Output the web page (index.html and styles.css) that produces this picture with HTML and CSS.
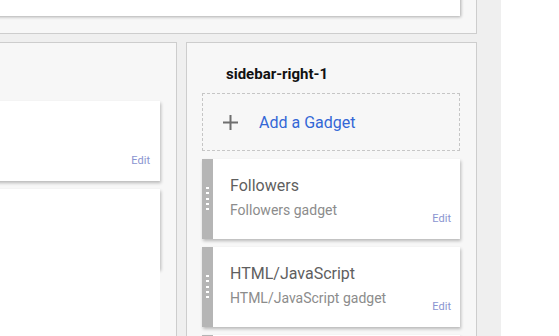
FILE: index.html
```html
<!DOCTYPE html>
<html lang="en">
<head>
    <meta charset="UTF-8">
    <meta name="viewport" content="width=device-width, initial-scale=1.0">
    <title>Layout</title>
    <link rel="stylesheet" href="styles.css">
</head>
<body>
    <div class="editor">
        <section class="section section-top">
            <div class="header-widget"></div>
        </section>

        <div class="columns">
            <section class="section section-main">
                <div class="widget">
                    <div class="widget-body">
                        <div class="widget-text"></div>
                        <a class="edit" href="#">Edit</a>
                    </div>
                </div>
                <div class="widget">
                    <div class="widget-body tall"></div>
                </div>
            </section>

            <section class="section section-side">
                <h3 class="section-title">sidebar-right-1</h3>
                <div class="add-gadget">
                    <svg class="plus" width="15" height="15" viewBox="0 0 15 15">
                        <path d="M7.5 0v15M0 7.5h15" stroke="#6f6f6f" stroke-width="2" fill="none"/>
                    </svg>
                    <a href="#">Add a Gadget</a>
                </div>
                <div class="widget">
                    <div class="handle"><span class="dots"></span></div>
                    <div class="widget-body">
                        <div class="widget-text">
                            <div class="widget-name">Followers</div>
                            <div class="widget-type">Followers gadget</div>
                        </div>
                        <a class="edit" href="#">Edit</a>
                    </div>
                </div>
                <div class="widget">
                    <div class="handle"><span class="dots"></span></div>
                    <div class="widget-body">
                        <div class="widget-text">
                            <div class="widget-name">HTML/JavaScript</div>
                            <div class="widget-type">HTML/JavaScript gadget</div>
                        </div>
                        <a class="edit" href="#">Edit</a>
                    </div>
                </div>
                <div class="widget">
                    <div class="handle"><span class="dots"></span></div>
                    <div class="widget-body"></div>
                </div>
            </section>
        </div>
    </div>
</body>
</html>
```

FILE: styles.css
```css
body {
    margin: 0;
    background-color: #ffffff;
    font-family: Roboto, "Noto Sans", Arial, sans-serif;
    overflow: hidden;
}

.editor {
    width: 801px;
    margin: -80px 0 0 -300px;
    padding: 0 24px 40px 16px;
    box-sizing: border-box;
    background-color: #efefef;
}

.section {
    background-color: #f7f7f7;
    border: 1px solid #cdcdcd;
    box-sizing: border-box;
}

.section-top {
    padding: 16px 16px 17px;
}

.header-widget {
    height: 79px;
    background-color: #ffffff;
    box-shadow: 1px 1px 3px rgba(0, 0, 0, 0.3);
}

.columns {
    display: flex;
    gap: 9px;
    margin-top: 8px;
}

.section-main {
    flex: 1;
    padding: 58px 16px 0 16px;
}

.section-side {
    width: 291px;
    padding: 0 16px 0 15px;
}

.section-title {
    margin: 21px 0 9px;
    padding-left: 24px;
    font-size: 15px;
    font-weight: 700;
    line-height: 20px;
    color: #111111;
}

.add-gadget {
    display: flex;
    align-items: center;
    height: 58px;
    padding: 0 0 0 20px;
    border: 1px dashed #c6c6c6;
    box-sizing: border-box;
    margin-bottom: 8px;
}

.plus {
    margin-right: 21px;
}

.add-gadget a {
    font-size: 16px;
    color: #3367d6;
    text-decoration: none;
}

.widget {
    display: flex;
    height: 80px;
    margin-bottom: 8px;
    box-shadow: 1px 2px 3px rgba(0, 0, 0, 0.25);
}

.handle {
    display: flex;
    align-items: center;
    justify-content: center;
    width: 11px;
    background-color: #b5b5b5;
}

.dots {
    width: 3px;
    height: 24px;
    background: repeating-linear-gradient(#ffffff 0 2px, transparent 2px 5.3px);
}

.widget-body {
    flex: 1;
    display: flex;
    padding: 17px 9px 14px 17px;
    background-color: #ffffff;
}

.widget-body.tall {
    height: 200px;
}

.widget-text {
    flex: 1;
}

.widget-name {
    font-size: 16px;
    line-height: 20px;
    color: #5f5f5f;
}

.widget-type {
    margin-top: 5px;
    font-size: 14px;
    line-height: 18px;
    color: #8c8c8c;
}

.edit {
    align-self: flex-end;
    font-size: 11px;
    line-height: 13px;
    color: #8a94d0;
    text-decoration: none;
}

.section-main .edit {
    margin-right: 1px;
}
```
